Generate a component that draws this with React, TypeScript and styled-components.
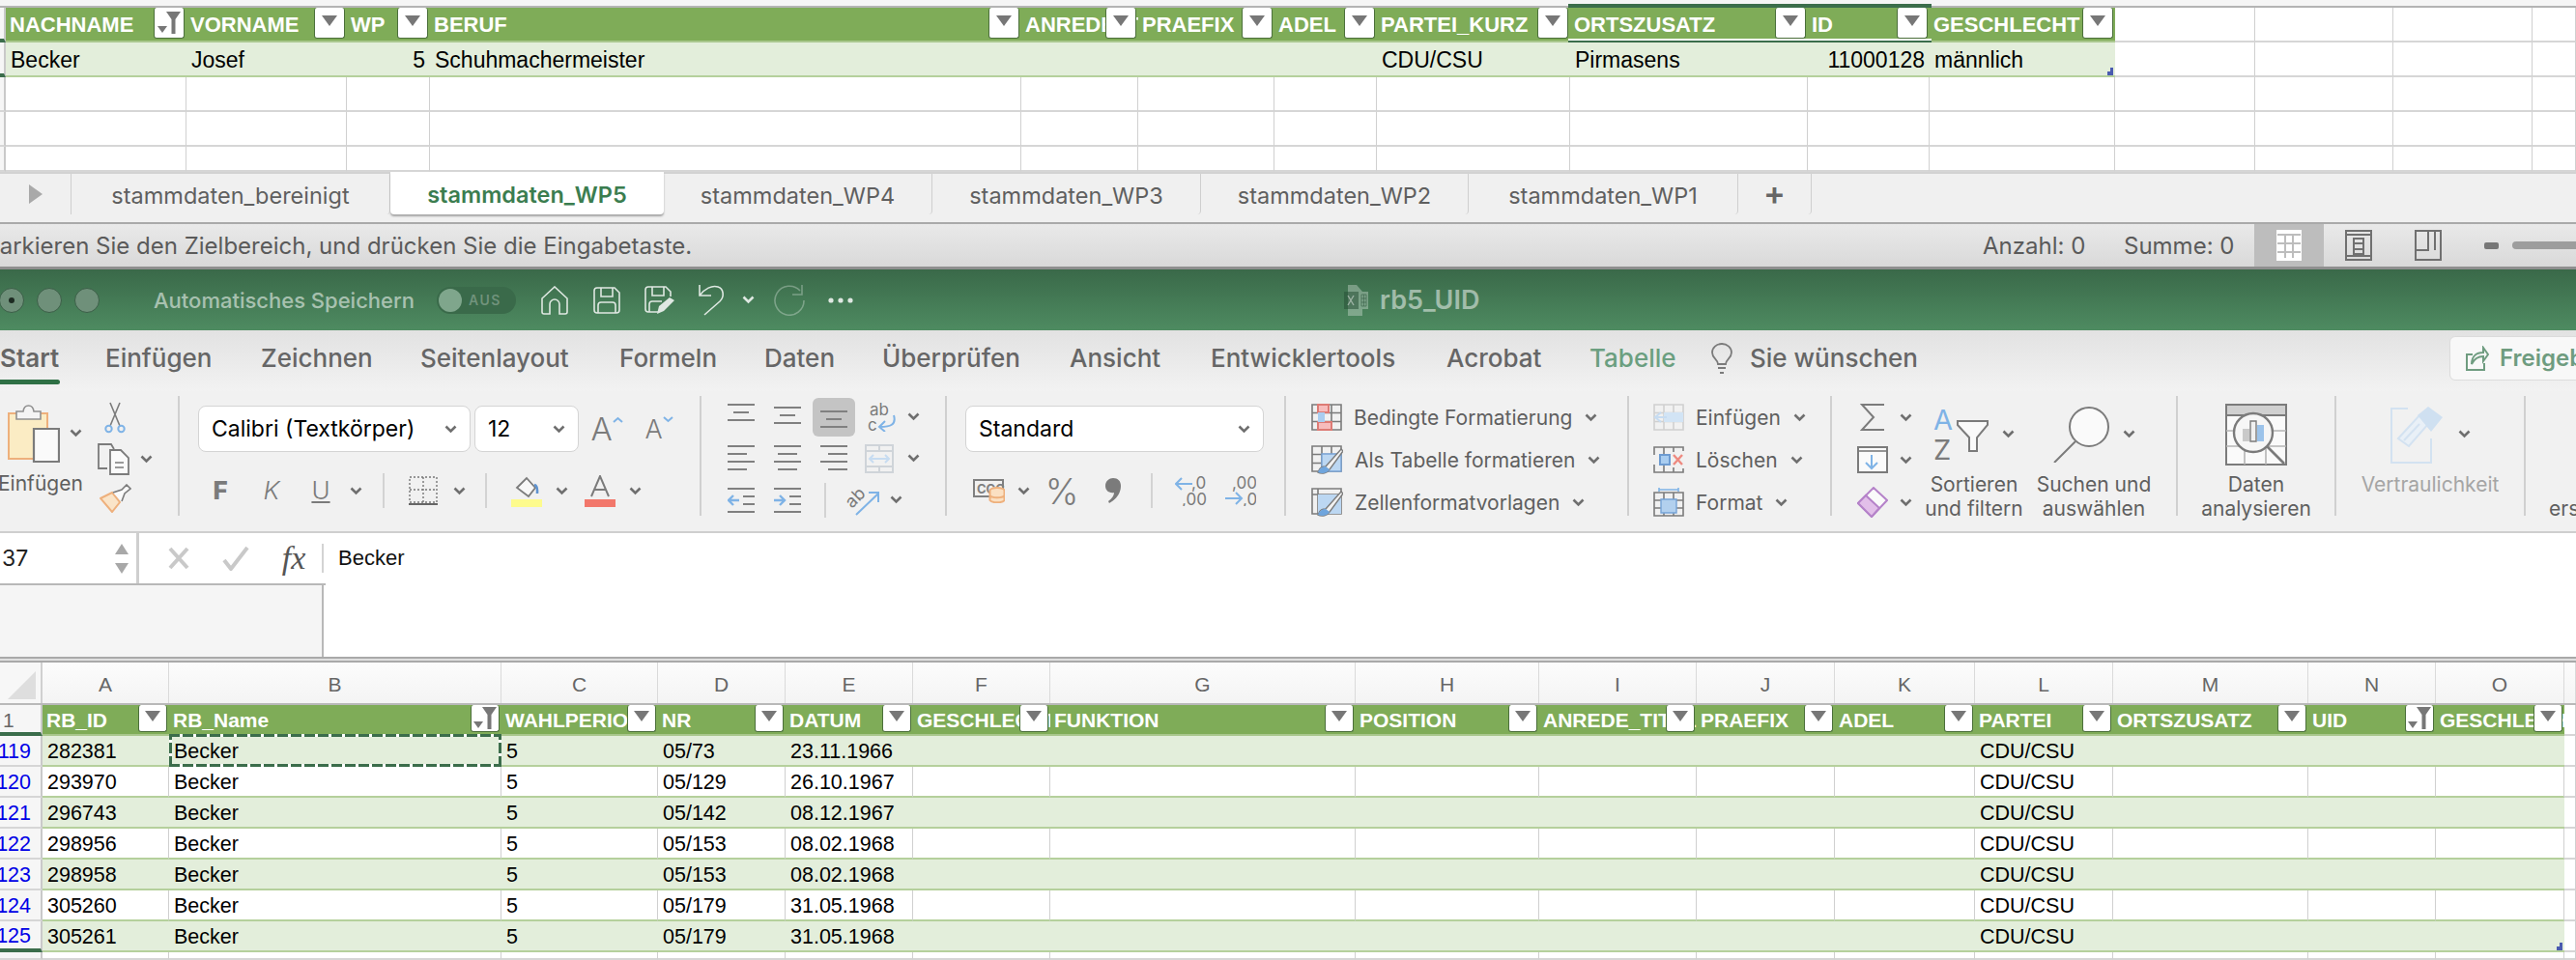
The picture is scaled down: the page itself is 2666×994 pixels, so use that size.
import * as React from "react";
import styled, { createGlobalStyle } from "styled-components";

const GRAY = "#7b7b7b";
const BLUE = "#7fb3e6";
const ORANGE = "#eeb07c";

const GlobalStyle = createGlobalStyle`
  html, body {
    margin: 0;
    background: #fff;
    font-family: Inter, "Liberation Sans", sans-serif;
  }
`;

const Page = styled.div`
  width: 2666px;
  height: 994px;
  overflow: hidden;
  display: flex;
  flex-direction: column;
`;

const Glyph = styled.svg`
  display: block;
  flex: none;
  fill: none;
`;

const Chevron = ({ color = "#6f6f6f" }: { color?: string }) => (
  <Glyph width="13" height="9" viewBox="0 0 13 9">
    <path d="M1.5 1.5l5 5 5-5" stroke={color} strokeWidth="2.6" />
  </Glyph>
);

/* ---------- spreadsheet parts ---------- */

const SheetRow = styled.div<{ $cols: string; $h: number; $size: number }>`
  display: grid;
  grid-template-columns: ${(p) => p.$cols};
  height: ${(p) => p.$h}px;
  flex: none;
  position: relative;
  font-family: "Liberation Sans", sans-serif;
  font-size: ${(p) => p.$size}px;
  color: #000;
`;

const Gutter = styled.div<{ $mark?: boolean }>`
  box-sizing: border-box;
  background: #f6f6f6;
  border-right: 2px solid #c9c9c9;
  border-bottom: ${(p) => (p.$mark ? "4px solid #3b6d4b" : "2px solid #d6d6d6")};
  overflow: hidden;
`;

const RowNumber = styled(Gutter)<{ $first?: boolean }>`
  display: flex;
  align-items: center;
  justify-content: ${(p) => (p.$first ? "flex-start" : "flex-end")};
  padding: ${(p) => (p.$first ? "3px 0 0 3px" : "3px 10px 0 0")};
  color: ${(p) => (p.$first ? "#666" : "#0000e6")};
  white-space: nowrap;
`;

const Cell = styled.div<{ $band?: boolean; $table?: boolean; $right?: boolean; $handle?: boolean }>`
  box-sizing: border-box;
  position: relative;
  min-width: 0;
  display: flex;
  align-items: center;
  justify-content: ${(p) => (p.$right ? "flex-end" : "flex-start")};
  padding: 3px 5px 0;
  white-space: nowrap;
  overflow: hidden;
  background: ${(p) => (p.$band ? "#e3eedb" : "#fff")};
  border-bottom: 2px solid ${(p) => (p.$table ? "#b5d09c" : "#d6d6d6")};
  border-right: ${(p) => (p.$band ? "0" : "1px solid #d0d0d0")};
  ${(p) =>
    p.$handle &&
    `&::after {
      content: "";
      position: absolute;
      right: 2px;
      bottom: 0;
      width: 6px;
      height: 8px;
      background: #4a5bb0;
      clip-path: polygon(50% 0, 100% 0, 100% 100%, 0 100%, 0 50%, 50% 50%);
    }`}
`;

const HeadCell = styled.div`
  box-sizing: border-box;
  position: relative;
  min-width: 0;
  display: flex;
  align-items: center;
  padding: 2px 4px 0;
  white-space: nowrap;
  overflow: hidden;
  background: #7fac58;
  color: #fff;
  font-weight: 700;
  border-bottom: 2px solid #a9c78d;
`;

const FilterButton = styled.div<{ $w: number }>`
  position: absolute;
  top: 0;
  right: 2px;
  bottom: 2px;
  width: ${(p) => p.$w}px;
  box-sizing: border-box;
  background: #fff;
  border-radius: 3px;
  border: 1px solid #4b6f3a;
  border-top: 0;
  display: flex;
  align-items: center;
  justify-content: center;
  &::before {
    content: "";
    margin-top: -4px;
    border-left: 8px solid transparent;
    border-right: 8px solid transparent;
    border-top: 11px solid #777;
  }
`;

const FilterOnButton = styled(FilterButton)`
  &::before {
    display: none;
  }
`;

const FunnelMark = () => (
  <Glyph width="28" height="30" viewBox="0 0 28 30">
    <path d="M11 3h15l-5.5 8v15h-4V11z" fill="#777" />
    <path d="M2 18h10l-5 7z" fill="#777" />
  </Glyph>
);

const SelectionBand = styled.div`
  position: absolute;
  grid-column: 10 / 12;
  grid-row: 1;
  top: -4px;
  bottom: -2px;
  left: -2px;
  right: -2px;
  border-top: 4px solid #3b6d4b;
  border-bottom: 4px solid #3b6d4b;
  box-shadow: inset 0 -2px 0 #fff;
  pointer-events: none;
`;

const Marquee = styled.div`
  position: absolute;
  grid-column: 3 / 4;
  grid-row: 1;
  top: -2px;
  bottom: 0;
  left: 0;
  right: 0;
  pointer-events: none;
  background:
    repeating-linear-gradient(90deg, #3b6d4b 0 11px, #fff 11px 14px) top / 100% 3px no-repeat,
    repeating-linear-gradient(90deg, #3b6d4b 0 11px, #fff 11px 14px) bottom / 100% 3px no-repeat,
    repeating-linear-gradient(0deg, #3b6d4b 0 11px, #fff 11px 14px) left / 3px 100% no-repeat,
    repeating-linear-gradient(0deg, #3b6d4b 0 11px, #fff 11px 14px) right / 3px 100% no-repeat;
`;

/* ---------- upper window ---------- */

const TopStrip = styled.div`
  height: 6px;
  flex: none;
  background: #f5f5f5;
  border-bottom: 2px solid #b4b4b4;
`;

const TOP_COLS = "6px 187px 166px 86px 612px 121px 141px 106px 200px 246px 126px 192px 145px 143px 144px 45px";
const BOTTOM_COLS = "44px 131px 344px 162px 132px 132px 142px 316px 190px 163px 143px 145px 143px 202px 132px 133px 12px";

const TOP_HEAD = ["NACHNAME", "VORNAME", "WP", "BERUF", "ANREDE_TITEL", "PRAEFIX", "ADEL", "PARTEI_KURZ", "ORTSZUSATZ", "ID", "GESCHLECHT"];
const TOP_ROW = ["Becker", "Josef", "5", "Schuhmachermeister", "", "", "", "CDU/CSU", "Pirmasens", "11000128", "männlich"];

const TabBar = styled.div`
  box-sizing: border-box;
  height: 54px;
  flex: none;
  display: flex;
  background: #f0f0f0;
  border-top: 2px solid #d2d2d2;
  border-bottom: 2px solid #a9a9a9;
`;

const TabArrow = styled.div`
  width: 74px;
  height: 42px;
  flex: none;
  box-sizing: border-box;
  border-right: 1px solid #cfcfcf;
  display: flex;
  align-items: center;
  justify-content: center;
  &::before {
    content: "";
    border-top: 10px solid transparent;
    border-bottom: 10px solid transparent;
    border-left: 14px solid #a9a9a9;
  }
`;

const SheetTab = styled.div<{ $w: number; $active?: boolean }>`
  width: ${(p) => p.$w}px;
  height: ${(p) => (p.$active ? 44 : 42)}px;
  margin-top: ${(p) => (p.$active ? -2 : 0)}px;
  padding-top: 2px;
  flex: none;
  box-sizing: border-box;
  display: flex;
  align-items: center;
  justify-content: center;
  font-size: 23.5px;
  white-space: nowrap;
  color: ${(p) => (p.$active ? "#3b7d4f" : "#5f5f5f")};
  font-weight: ${(p) => (p.$active ? 600 : 400)};
  background: ${(p) => (p.$active ? "#fff" : "transparent")};
  border-right: ${(p) => (p.$active ? "0" : "1px solid #cfcfcf")};
  border-radius: 0 0 4px 4px;
  box-shadow: ${(p) => (p.$active ? "0 2px 2px #a5a5a5" : "none")};
`;

const PlusTab = styled(SheetTab)`
  color: #666;
  font-size: 34px;
  font-weight: 600;
  padding: 0 0 3px;
`;

const StatusBar = styled.div`
  box-sizing: border-box;
  height: 44px;
  flex: none;
  display: flex;
  align-items: center;
  background: linear-gradient(#e9e9e9, #d9d9d9);
  font-size: 24px;
  color: #5a5a5a;
`;

const StatusText = styled.div`
  margin-left: -22px;
  width: 2074px;
  flex: none;
  white-space: nowrap;
`;

const StatusValue = styled.div<{ $w: number }>`
  width: ${(p) => p.$w}px;
  flex: none;
  white-space: nowrap;
`;

const ViewButton = styled.div<{ $active?: boolean }>`
  width: 72px;
  height: 44px;
  flex: none;
  display: flex;
  align-items: center;
  justify-content: center;
  background: ${(p) => (p.$active ? "#bdbdbd" : "transparent")};
`;

const ZoomSlider = styled.div`
  margin-left: 22px;
  display: flex;
  align-items: center;
  gap: 14px;
  &::before {
    content: "";
    width: 15px;
    height: 7px;
    background: #777;
    border-radius: 2px;
  }
  &::after {
    content: "";
    width: 90px;
    height: 8px;
    background: #9d9d9d;
    border-radius: 4px;
  }
`;

const BehindLine = styled.div`
  height: 3px;
  flex: none;
  background: #8f8f8f;
`;

/* ---------- title bar ---------- */

const TitleBar = styled.div`
  box-sizing: border-box;
  height: 63px;
  flex: none;
  display: flex;
  align-items: center;
  background: linear-gradient(#3a6949, #4e8b61);
  color: rgba(255, 255, 255, 0.5);
`;

const WindowDots = styled.div`
  margin-left: -1px;
  width: 160px;
  flex: none;
  display: flex;
  gap: 13px;
`;

const WindowDot = styled.div<{ $on?: boolean }>`
  width: 26px;
  height: 26px;
  box-sizing: border-box;
  border-radius: 50%;
  background: #6f907a;
  border: 1px solid #3c5f48;
  display: flex;
  align-items: center;
  justify-content: center;
  &::after {
    content: "";
    width: 6px;
    height: 6px;
    border-radius: 50%;
    background: ${(p) => (p.$on ? "#1d2b22" : "transparent")};
  }
`;

const AutoSave = styled.div`
  width: 293px;
  flex: none;
  font-size: 22px;
  font-weight: 500;
  white-space: nowrap;
  color: rgba(255, 255, 255, 0.55);
`;

const Toggle = styled.div`
  width: 82px;
  height: 28px;
  flex: none;
  box-sizing: border-box;
  margin-right: 13px;
  border-radius: 14px;
  background: #3a6a4a;
  display: flex;
  align-items: center;
  gap: 7px;
  padding-left: 2px;
  font-size: 14px;
  font-weight: 600;
  letter-spacing: 1.5px;
  color: rgba(255, 255, 255, 0.28);
  &::before {
    content: "";
    width: 24px;
    height: 24px;
    border-radius: 50%;
    background: #7fa68c;
  }
`;

const QuickTool = styled.div<{ $w: number }>`
  width: ${(p) => p.$w}px;
  flex: none;
  display: flex;
  justify-content: center;
`;

const DocTitle = styled.div`
  margin-left: 498px;
  display: flex;
  align-items: center;
  gap: 11px;
  font-size: 27px;
  font-weight: 600;
  color: rgba(255, 255, 255, 0.5);
`;

const QS = "#dfe8e2";

const HomeIcon = () => (
  <Glyph width="28" height="30" viewBox="0 0 28 30">
    <path d="M1 13L14 1l13 12v14a2 2 0 0 1-2 2h-6V19a5 5 0 0 0-10 0v10H3a2 2 0 0 1-2-2z" stroke={QS} strokeWidth="1.6" />
  </Glyph>
);
const SaveIcon = () => (
  <Glyph width="28" height="28" viewBox="0 0 28 28">
    <path d="M4 1h18l5 5v18a3 3 0 0 1-3 3H4a3 3 0 0 1-3-3V4a3 3 0 0 1 3-3zM8 1v9h12V1M5 27v-8a3 3 0 0 1 3-3h12a3 3 0 0 1 3 3v8" stroke={QS} strokeWidth="1.6" />
  </Glyph>
);
const SaveAsIcon = () => (
  <Glyph width="32" height="30" viewBox="0 0 32 30">
    <path d="M14 27H4a3 3 0 0 1-3-3V4a3 3 0 0 1 3-3h18l5 5v5M8 1v9h12V1M5 27v-8a3 3 0 0 1 3-3h10" stroke={QS} strokeWidth="1.6" />
    <path d="M13 29l2-8 11-9 5 3-11 11z" fill={QS} />
  </Glyph>
);
const UndoIcon = () => (
  <Glyph width="28" height="33" viewBox="0 0 28 33">
    <path d="M1 1v11h12M1 12C6 5 14 1 20 3c6 2 7 10 2 15L6 32" stroke={QS} strokeWidth="1.6" />
  </Glyph>
);
const RedoIcon = () => (
  <Glyph width="33" height="33" viewBox="0 0 33 33">
    <path d="M28 7A15 15 0 1 0 32 17M30 1v10H20" stroke="rgba(255,255,255,.3)" strokeWidth="1.6" />
  </Glyph>
);
const MoreIcon = () => (
  <Glyph width="26" height="6" viewBox="0 0 26 6">
    <circle cx="3" cy="3" r="2.6" fill={QS} />
    <circle cx="13" cy="3" r="2.6" fill={QS} />
    <circle cx="23" cy="3" r="2.6" fill={QS} />
  </Glyph>
);
const XlsFileIcon = () => (
  <Glyph width="26" height="34" viewBox="0 0 26 34">
    <path d="M4 1h9l6 7h6v18h-6v7H4z" fill="rgba(255,255,255,.3)" />
    <path d="M0 8h15v18H0z" fill="rgba(40,80,55,.55)" />
    <path d="M4 12l6 10M10 12l-6 10" stroke="rgba(255,255,255,.45)" strokeWidth="1.4" />
    <path d="M18 11h5v12h-5zM20.5 11v12M18 15h5M18 19h5" stroke="rgba(40,80,55,.5)" strokeWidth="1" />
  </Glyph>
);

/* ---------- ribbon tabs ---------- */

const RibbonTabs = styled.div`
  box-sizing: border-box;
  height: 63px;
  flex: none;
  padding-bottom: 6px;
  display: flex;
  align-items: center;
  overflow: hidden;
  background: linear-gradient(#e2e2e2, #f2f2f2);
  font-size: 26px;
  color: #666;
`;

const RibbonTab = styled.div<{ $w: number; $on?: boolean; $green?: boolean }>`
  width: ${(p) => p.$w}px;
  flex: none;
  position: relative;
  white-space: nowrap;
  font-weight: ${(p) => (p.$on ? 600 : 500)};
  color: ${(p) => (p.$green ? "#6b9f80" : "#666")};
  ${(p) =>
    p.$on &&
    `&::after {
      content: "";
      position: absolute;
      left: 0;
      top: 38px;
      width: 62px;
      height: 5px;
      border-radius: 0 3px 3px 0;
      background: #2f7045;
    }`}
`;

const ShareButton = styled.div`
  width: 180px;
  height: 46px;
  flex: none;
  box-sizing: border-box;
  padding-left: 16px;
  display: flex;
  align-items: center;
  gap: 11px;
  background: #f8f8f8;
  border: 1px solid #dcdcdc;
  border-radius: 6px;
  font-size: 24px;
  font-weight: 600;
  color: #6f9c80;
  white-space: nowrap;
`;

/* ---------- ribbon body ---------- */

const RibbonBody = styled.div`
  box-sizing: border-box;
  height: 147px;
  flex: none;
  padding-top: 5px;
  display: flex;
  background: #f1f1f1;
  border-bottom: 2px solid #cfcfcf;
  font-size: 21px;
  color: #5f5f5f;
`;

const Group = styled.div<{ $w: number; $pad?: number; $row?: boolean; $last?: boolean }>`
  width: ${(p) => p.$w}px;
  height: 124px;
  flex: none;
  box-sizing: border-box;
  padding-left: ${(p) => p.$pad || 0}px;
  display: flex;
  flex-direction: ${(p) => (p.$row ? "row" : "column")};
  border-right: ${(p) => (p.$last ? "0" : "2px solid #d0d0d0")};
  overflow: ${(p) => (p.$last ? "hidden" : "visible")};
`;

const ToolRow = styled.div<{ $h?: number; $top?: number }>`
  height: ${(p) => p.$h || 43}px;
  margin-top: ${(p) => p.$top || 0}px;
  display: flex;
  align-items: center;
  flex: none;
`;

const Tool = styled.div<{ $w: number }>`
  width: ${(p) => p.$w}px;
  flex: none;
  display: flex;
  align-items: center;
  justify-content: center;
  white-space: nowrap;
`;

const ActiveTool = styled.div`
  width: 44px;
  height: 40px;
  background: #c4c4c4;
  border-radius: 6px;
  display: flex;
  align-items: center;
  justify-content: center;
`;

const ToolSeparator = styled.div<{ $h?: number }>`
  width: 2px;
  flex: none;
  height: ${(p) => p.$h || 36}px;
  background: #d3d3d3;
`;

const Combo = styled.div<{ $w: number }>`
  width: ${(p) => p.$w}px;
  height: 48px;
  flex: none;
  box-sizing: border-box;
  padding: 0 13px;
  display: flex;
  align-items: center;
  justify-content: space-between;
  background: #fff;
  border: 1px solid #d4d4d4;
  border-radius: 8px;
  color: #000;
  font-size: 23px;
  white-space: nowrap;
`;

const PasteColumn = styled.div`
  width: 100px;
  flex: none;
  display: flex;
  flex-direction: column;
`;

const PasteTop = styled.div`
  height: 79px;
  flex: none;
  padding-left: 8px;
  display: flex;
  align-items: center;
  gap: 10px;
  margin-top: -1px;
`;

const SmallColumn = styled.div`
  width: 36px;
  flex: none;
  display: flex;
  flex-direction: column;
  align-items: center;
  gap: 9px;
  margin-left: 1px;
  padding-top: 6px;
`;

const CopyRow = styled.div`
  display: flex;
  align-items: center;
  gap: 11px;
  width: 36px;
  position: relative;
`;

const ListRow = styled.div`
  height: 44px;
  flex: none;
  display: flex;
  align-items: center;
  white-space: nowrap;
`;

const ListLabel = styled.span`
  margin: 0 13px 0 12px;
  color: #5f5f5f;
`;

const BigColumn = styled.div<{ $w: number }>`
  width: ${(p) => p.$w}px;
  flex: none;
  display: flex;
  flex-direction: column;
  align-items: center;
`;

const BigIcon = styled.div<{ $gap?: number }>`
  height: 79px;
  flex: none;
  display: flex;
  align-items: center;
  gap: ${(p) => p.$gap || 14}px;
`;

const BigLabel = styled.div<{ $dim?: boolean }>`
  line-height: 25px;
  flex: none;
  text-align: center;
  white-space: nowrap;
  color: ${(p) => (p.$dim ? "#a5a5a5" : "#5f5f5f")};
`;

const PasteLabel = styled(BigLabel)`
  text-align: left;
  margin-left: -2px;
`;

const LastLabel = styled.div`
  padding: 104px 0 0 24px;
  line-height: 25px;
  white-space: nowrap;
`;

const FontGlyph = styled.span<{ $size: number; $weight?: number; $italic?: boolean; $color?: string }>`
  font-size: ${(p) => p.$size}px;
  font-weight: ${(p) => p.$weight || 400};
  font-style: ${(p) => (p.$italic ? "italic" : "normal")};
  color: ${(p) => p.$color || "#7b7b7b"};
  line-height: 1;
`;

/* ribbon icons */

const ClipboardIcon = () => (
  <Glyph width="54" height="60" viewBox="0 0 54 60">
    <path d="M1 9h40v47H1z" fill="#fbecc4" stroke={ORANGE} strokeWidth="2" />
    <path d="M9 15V7h7c1-8 10-8 11 0h7v8z" fill="#f4f4f4" stroke="#909090" strokeWidth="1.6" />
    <path d="M27 25h26v34H27z" fill="#fafafa" stroke={GRAY} strokeWidth="2.2" />
  </Glyph>
);
const ScissorsIcon = () => (
  <Glyph width="22" height="34" viewBox="0 0 22 34">
    <path d="M6 1l10 24M16 1L6 25" stroke={GRAY} strokeWidth="1.6" />
    <circle cx="4.5" cy="28" r="3.2" stroke={BLUE} strokeWidth="2" />
    <circle cx="17.5" cy="28" r="3.2" stroke={BLUE} strokeWidth="2" />
  </Glyph>
);
const CopyIcon = () => (
  <Glyph width="33" height="33" viewBox="0 0 33 33">
    <path d="M10 26H1V1h13l3 5" stroke={GRAY} strokeWidth="1.8" />
    <path d="M13 7h11l8 8v17H13z" fill="#fafafa" stroke={GRAY} strokeWidth="1.8" />
    <path d="M18 20h9M18 25h9" stroke={GRAY} strokeWidth="1.6" />
  </Glyph>
);
const BrushIcon = () => (
  <Glyph width="33" height="30" viewBox="0 0 33 30">
    <path d="M1 15l12-6 8 10-8 10z" fill="#fae4c8" stroke={ORANGE} strokeWidth="2" />
    <path d="M14 9l9-3 5-5 4 4-6 5-3 8" fill="#fafafa" stroke={GRAY} strokeWidth="1.6" />
  </Glyph>
);
const GrowFontIcon = ({ up }: { up: boolean }) => (
  <Glyph width="11" height="26" viewBox="0 0 11 26">
    <path d={up ? "M1 6l4.5-4 4.5 4" : "M1 1l4.5 4 4.5-4"} stroke={BLUE} strokeWidth="2" />
  </Glyph>
);
const BorderIcon = () => (
  <Glyph width="30" height="30" viewBox="0 0 30 30">
    <path d="M1 1h28v26H1zM15 1v26M1 14h28" stroke="#777" strokeWidth="1.4" strokeDasharray="2 2" />
    <path d="M0 29h30" stroke="#666" strokeWidth="2" />
  </Glyph>
);
const FillIcon = () => (
  <Glyph width="32" height="33" viewBox="0 0 32 33">
    <path d="M6 13L16 3l9 10-7 9z" fill="#f8f8f8" stroke={GRAY} strokeWidth="1.8" />
    <path d="M24 10c4 1 3 6 3 9" stroke="#5f93d0" strokeWidth="2.6" />
    <path d="M0 25h32v8H0z" fill="#fdfb8d" />
  </Glyph>
);
const FontColorIcon = () => (
  <Glyph width="32" height="33" viewBox="0 0 32 33">
    <path d="M7 22L16 1l9 21M10 15h12" stroke={GRAY} strokeWidth="2" />
    <path d="M0 25h32v8H0z" fill="#f2776b" />
  </Glyph>
);
const AlignIcon = ({ h = "center", v = "mid" }: { h?: string; v?: string }) => {
  const y0 = v === "top" ? 1 : v === "mid" ? 4 : 8;
  const d = (w: number, y: number) => {
    const x = h === "left" ? 0 : h === "right" ? 28 - w : (28 - w) / 2;
    return `M${x} ${y}h${w}`;
  };
  const lines =
    v === "fill"
      ? [d(28, 1), d(20, 9), d(28, 17), d(20, 25)]
      : [d(28, y0), d(16, y0 + 8), d(28, y0 + 16)];
  return (
    <Glyph width="28" height="28" viewBox="0 0 28 28">
      <path d={lines.join("")} stroke="#808080" strokeWidth="2" />
    </Glyph>
  );
};
const WrapIcon = () => (
  <Glyph width="30" height="30" viewBox="0 0 30 30">
    <text x="2" y="13" fontSize="17" fill={GRAY}>ab</text>
    <text x="0" y="29" fontSize="17" fill={GRAY}>c</text>
    <path d="M27 13c3 10-4 12-14 12M18 19l-6 6 6 5" stroke={BLUE} strokeWidth="2" />
  </Glyph>
);
const MergeIcon = () => (
  <Glyph width="30" height="30" viewBox="0 0 30 30">
    <path d="M1 1h28v28H1zM1 7h28M1 23h28M15 1v6M15 23v6" stroke="#cfd4d9" strokeWidth="2" />
    <path d="M5 15h20M9 11l-4 4 4 4M21 11l4 4-4 4" stroke="#c7dcf1" strokeWidth="2" />
  </Glyph>
);
const IndentIcon = ({ out }: { out: boolean }) => (
  <Glyph width="28" height="26" viewBox="0 0 28 26">
    <path d="M0 1h28M16 9h12M16 17h12M0 25h28" stroke="#808080" strokeWidth="2" />
    <path d={out ? "M12 13H1M6 8l-5 5 5 5" : "M0 13h11M6 8l5 5-5 5"} stroke={BLUE} strokeWidth="2.4" />
  </Glyph>
);
const RotateIcon = () => (
  <Glyph width="34" height="32" viewBox="0 0 34 32">
    <text x="0" y="19" fontSize="18" fill={GRAY} transform="rotate(-45 10 15)">ab</text>
    <path d="M10 31L33 9M23 8h10v10" stroke={BLUE} strokeWidth="2" />
  </Glyph>
);
const CurrencyIcon = () => (
  <Glyph width="33" height="26" viewBox="0 0 33 26">
    <path d="M1 2h30v17H1z" stroke="#808080" strokeWidth="2" />
    <text x="4" y="16" fontSize="13" fontWeight="700" fill="#808080">CCC</text>
    <ellipse cx="25" cy="13" rx="7.5" ry="3" fill="#fbe0c2" stroke={ORANGE} strokeWidth="2" />
    <path d="M17.5 13v10c2 3 13 3 15 0V13M17.5 18c2 3 13 3 15 0" fill="#fbe0c2" stroke={ORANGE} strokeWidth="2" />
  </Glyph>
);
const CommaIcon = () => (
  <Glyph width="16" height="26" viewBox="0 0 16 26">
    <path d="M8 0c5 0 8 3 8 8 0 8-5 14-12 18l-1-2c4-3 6-6 6-9-5 1-9-2-9-7 0-5 4-8 8-8z" fill="#7b7b7b" />
  </Glyph>
);
const DecimalIcon = ({ more }: { more: boolean }) => (
  <Glyph width="33" height="32" viewBox="0 0 33 32">
    {more ? (
      <>
        <text x="8" y="14" fontSize="17" fill={GRAY}>,00</text>
        <text x="19" y="31" fontSize="17" fill={GRAY}>,0</text>
        <path d="M1 24h17M12 18l6 6-6 6" stroke={BLUE} strokeWidth="2" />
      </>
    ) : (
      <>
        <text x="17" y="14" fontSize="17" fill={GRAY}>,0</text>
        <text x="7" y="31" fontSize="17" fill={GRAY}>,00</text>
        <path d="M18 9H1M7 3L1 9l6 6" stroke={BLUE} strokeWidth="2" />
      </>
    )}
  </Glyph>
);
const GridBase = ({ stroke = GRAY }: { stroke?: string }) => (
  <path d="M1 1h30v26H1zM11 1v26M21 1v26M1 9.5h30M1 18.5h30" stroke={stroke} strokeWidth="1.6" />
);
const CondFormatIcon = () => (
  <Glyph width="32" height="28" viewBox="0 0 32 28">
    <GridBase />
    <path d="M7 1h11v8H7zM7 19h14v8H7z" fill="#f7bcbc" stroke="#dd7b75" strokeWidth="2" />
    <path d="M7 9h7v10H7z" fill="#a9cdf0" />
  </Glyph>
);
const TableFormatIcon = () => (
  <Glyph width="33" height="30" viewBox="0 0 33 30">
    <GridBase />
    <path d="M11 9h20v18H11z" fill="#bcd7f2" stroke="#79a5d8" strokeWidth="1.4" />
    <path d="M7 28c2-6 5-6 8-6L31 4l2 2-14 19c-2 4-8 5-12 3z" fill="#f1f1f1" stroke={GRAY} strokeWidth="1.4" />
    <path d="M7 28c2-5 5-6 8-6l4 3c-2 4-8 5-12 3z" fill="#6fa5dd" />
  </Glyph>
);
const CellStyleIcon = () => (
  <Glyph width="33" height="30" viewBox="0 0 33 30">
    <path d="M1 1h30v26H1zM1 7h30M7 1v26" stroke={GRAY} strokeWidth="1.6" />
    <path d="M7 7h24v20H7z" fill="#bcd7f2" />
    <path d="M7 28c2-6 5-6 8-6L31 4l2 2-14 19c-2 4-8 5-12 3z" fill="#f1f1f1" stroke={GRAY} strokeWidth="1.4" />
    <path d="M7 28c2-5 5-6 8-6l4 3c-2 4-8 5-12 3z" fill="#6fa5dd" />
  </Glyph>
);
const InsertCellsIcon = () => (
  <Glyph width="32" height="28" viewBox="0 0 32 28">
    <GridBase stroke="#d0d0d0" />
    <path d="M11 9h20v10H11z" fill="#d2e4f5" />
    <path d="M14 14H2M8 9l-6 5 6 5" stroke="#c7dcf1" strokeWidth="2" />
  </Glyph>
);
const DeleteCellsIcon = () => (
  <Glyph width="32" height="28" viewBox="0 0 32 28">
    <path d="M1 9V1h30v4M1 19v8h30v-4M11 1v8M21 1v5M11 19v8M21 22v5" stroke={GRAY} strokeWidth="1.6" />
    <path d="M7 9h10v10H7z" fill="#a9cdf0" stroke="#6d9bd1" strokeWidth="2" />
    <path d="M21 9l9 10M30 9l-9 10" stroke="#ee8a80" strokeWidth="2.4" />
  </Glyph>
);
const FormatCellsIcon = () => (
  <Glyph width="32" height="30" viewBox="0 0 32 30">
    <path d="M1 5h30v24H1zM11 5v24M21 5v24M1 13h30M1 21h30" stroke={GRAY} strokeWidth="1.6" />
    <path d="M8 12h16v14H8z" fill="#b2d0ee" stroke="#76a3d6" strokeWidth="1.4" />
    <path d="M6 2h20M6 0v4M26 0v4" stroke={BLUE} strokeWidth="1.6" />
  </Glyph>
);
const SigmaIcon = () => (
  <Glyph width="26" height="28" viewBox="0 0 26 28">
    <path d="M25 1H2l12 13L2 27h23" stroke={GRAY} strokeWidth="2" />
  </Glyph>
);
const FillDownIcon = () => (
  <Glyph width="32" height="28" viewBox="0 0 32 28">
    <path d="M1 1h30v26H1z" fill="#fafafa" stroke={GRAY} strokeWidth="2" />
    <path d="M1 5h30" stroke={GRAY} strokeWidth="1.6" />
    <path d="M15 9v14M9 17l6 6 6-6" stroke={BLUE} strokeWidth="2" />
  </Glyph>
);
const EraserIcon = () => (
  <Glyph width="32" height="32" viewBox="0 0 32 32">
    <path d="M1 17L17 1l14 13-16 17z" fill="#fafafa" stroke="#b582c9" strokeWidth="2" />
    <path d="M1 17l8-8 14 13-8 9z" fill="#e2bfe9" stroke="#b582c9" strokeWidth="2" />
  </Glyph>
);
const SortFilterIcon = () => (
  <Glyph width="58" height="58" viewBox="0 0 58 58">
    <text x="0" y="24" fontSize="29" fill={BLUE}>A</text>
    <text x="0" y="55" fontSize="29" fill={GRAY}>Z</text>
    <path d="M25 15h31v4L45 32v14h-8V32L25 19z" fill="#fafafa" stroke={GRAY} strokeWidth="2" />
  </Glyph>
);
const LoupeIcon = () => (
  <Glyph width="58" height="58" viewBox="0 0 58 58">
    <circle cx="37" cy="21" r="20" fill="#fafafa" stroke={GRAY} strokeWidth="2" />
    <path d="M23 36L1 58" stroke={GRAY} strokeWidth="2" />
  </Glyph>
);
const AnalyzeIcon = () => (
  <Glyph width="64" height="64" viewBox="0 0 64 64">
    <path d="M1 1h62v62H1z" fill="#fafafa" stroke={GRAY} strokeWidth="2" />
    <path d="M1 1h62v11H1z" fill="#d0d0d0" stroke={GRAY} strokeWidth="2" />
    <path d="M1 28h62M1 44h62M20 44v19M42 44v19" stroke="#b5b5b5" strokeWidth="1.6" />
    <circle cx="29" cy="30" r="20" fill="#f6f6f6" stroke={GRAY} strokeWidth="2.4" />
    <path d="M18 26h7v13h-7z" fill="#c9c9c9" />
    <path d="M26 18h6v21h-6z" fill="#f0f0f0" stroke={GRAY} strokeWidth="1.4" />
    <path d="M33 22h7v17h-7z" fill="#9cc3ea" />
    <path d="M43 44l18 18" stroke={GRAY} strokeWidth="2.6" />
  </Glyph>
);
const ShieldDocIcon = () => (
  <Glyph width="56" height="60" viewBox="0 0 56 60">
    <path d="M18 3H1v56h41V34" stroke="#d3e2f1" strokeWidth="2" />
    <path d="M8 34L30 10l10 8-21 24z" fill="#e9f0f7" stroke="#d3e2f1" strokeWidth="2" />
    <path d="M14 36L30 19" stroke="#d3e2f1" strokeWidth="2" />
    <path d="M28 10l11-9 15 11-12 15z" fill="#cfe0f1" />
  </Glyph>
);
const BulbIcon = () => (
  <Glyph width="24" height="32" viewBox="0 0 24 32">
    <path d="M8 22c0-5-6-6-6-12a10 9 0 0 1 20 0c0 6-6 7-6 12zM8 26h8M10 31h4" stroke={GRAY} strokeWidth="1.8" />
  </Glyph>
);
const ShareIcon = () => (
  <Glyph width="24" height="26" viewBox="0 0 24 26">
    <path d="M7 9H1v16h18v-7M6 19c0-8 5-12 12-12V2l5 7-5 7v-5c-5 0-9 2-12 8z" stroke="#6f9c80" strokeWidth="2" />
  </Glyph>
);

/* status bar view icons */

const NormalViewIcon = () => (
  <Glyph width="26" height="32" viewBox="0 0 26 32">
    <path d="M0 0h26v32H0z" fill="#fff" />
    <path d="M1 5h24M1 14h24M1 23h24M9 5v24M17 5v24" stroke="#bdbdbd" strokeWidth="2" />
  </Glyph>
);
const PageViewIcon = () => (
  <Glyph width="28" height="32" viewBox="0 0 28 32">
    <path d="M1 1h26v30H1zM1 5h26M1 27h26" stroke="#707070" strokeWidth="2" />
    <path d="M9 9h10v16H9z" stroke="#707070" strokeWidth="2" />
    <path d="M9 14h10M9 20h10" stroke="#707070" strokeWidth="2" />
  </Glyph>
);
const BreakViewIcon = () => (
  <Glyph width="28" height="32" viewBox="0 0 28 32">
    <path d="M1 1h26v30H1zM1 21h14M14 1v20M21 1v20" stroke="#707070" strokeWidth="2" />
  </Glyph>
);

/* ---------- formula bar ---------- */

const FormulaBar = styled.div`
  height: 128px;
  flex: none;
  display: flex;
  background: #fff;
`;

const FormulaLeft = styled.div`
  width: 335px;
  flex: none;
  display: flex;
  flex-direction: column;
`;

const FormulaTop = styled.div`
  height: 52px;
  flex: none;
  display: flex;
  border-bottom: 2px solid #b8b8b8;
  margin-right: -2px;
`;

const NameBox = styled.div`
  width: 144px;
  flex: none;
  box-sizing: border-box;
  padding: 0 8px 0 2px;
  display: flex;
  align-items: center;
  justify-content: space-between;
  font-size: 23px;
  color: #222;
  background: #fff;
  border-right: 3px solid #cfcfcf;
`;

const Spinner = styled.div`
  display: flex;
  flex-direction: column;
  gap: 9px;
  &::before,
  &::after {
    content: "";
    border-left: 7px solid transparent;
    border-right: 7px solid transparent;
  }
  &::before {
    border-bottom: 11px solid #a8a8a8;
  }
  &::after {
    border-top: 11px solid #a8a8a8;
  }
`;

const FormulaTools = styled.div`
  flex: 1;
  display: flex;
  align-items: center;
`;

const FormulaButton = styled.div<{ $w: number }>`
  width: ${(p) => p.$w}px;
  flex: none;
  display: flex;
  justify-content: center;
`;

const FxLabel = styled.span`
  font-family: "Liberation Serif", serif;
  font-style: italic;
  font-size: 34px;
  color: #555;
`;

const FormulaSpacer = styled.div`
  flex: 1;
  background: #f5f5f5;
  border-right: 2px solid #b8b8b8;
`;

const FormulaValue = styled.div`
  flex: 1;
  height: 52px;
  padding-left: 15px;
  display: flex;
  align-items: center;
  font-family: "Liberation Sans", sans-serif;
  font-size: 22px;
  color: #111;
`;

const SplitLine = styled.div`
  box-sizing: border-box;
  height: 6px;
  flex: none;
  background: #e0e0e0;
  border-top: 2px solid #a9a9a9;
  border-bottom: 2px solid #a9a9a9;
`;

const Corner = styled.div`
  box-sizing: border-box;
  background: #f7f7f7;
  border-right: 2px solid #d0d0d0;
  display: flex;
  align-items: flex-end;
  padding: 0 0 4px 8px;
  &::before {
    content: "";
    width: 0;
    height: 0;
    border-left: 29px solid transparent;
    border-bottom: 29px solid #dedede;
  }
`;

const ColumnLetter = styled.div`
  box-sizing: border-box;
  display: flex;
  align-items: center;
  justify-content: center;
  padding-top: 3px;
  background: linear-gradient(#fcfcfc, #f4f4f4);
  border-right: 1px solid #dadada;
  color: #666;
  font-size: 21px;
`;

const LetterRule = styled.div`
  height: 2px;
  flex: none;
  background: #b9b9b9;
`;

const CloseIcon = () => (
  <Glyph width="24" height="26" viewBox="0 0 24 26">
    <path d="M3 3l18 20M21 3L3 23" stroke="#c9c9c9" strokeWidth="4" />
  </Glyph>
);
const CheckIcon = () => (
  <Glyph width="28" height="26" viewBox="0 0 28 26">
    <path d="M2 15l7 9L26 2" stroke="#c9c9c9" strokeWidth="4" />
  </Glyph>
);

/* ---------- bottom sheet data ---------- */

const BOTTOM_HEAD = [
  "RB_ID", "RB_Name", "WAHLPERIODE", "NR", "DATUM", "GESCHLECHT", "FUNKTION", "POSITION",
  "ANREDE_TITEL", "PRAEFIX", "ADEL", "PARTEI", "ORTSZUSATZ", "UID", "GESCHLECHT",
];
const LETTERS = "ABCDEFGHIJKLMNO".split("");
const BOTTOM_ROWS = [
  ["119", "282381", "05/73", "23.11.1966"],
  ["120", "293970", "05/129", "26.10.1967"],
  ["121", "296743", "05/142", "08.12.1967"],
  ["122", "298956", "05/153", "08.02.1968"],
  ["123", "298958", "05/153", "08.02.1968"],
  ["124", "305260", "05/179", "31.05.1968"],
  ["125", "305261", "05/179", "31.05.1968"],
];

const SHEET_TABS: [string, number][] = [
  ["stammdaten_bereinigt", 330],
  ["stammdaten_WP5", 283],
  ["stammdaten_WP4", 278],
  ["stammdaten_WP3", 278],
  ["stammdaten_WP2", 277],
  ["stammdaten_WP1", 279],
];

const UpperSheet = () => (
  <>
    <TopStrip />
    <SheetRow $cols={TOP_COLS} $h={36} $size={22}>
      <Gutter $mark />
      {TOP_HEAD.map((name, i) => (
        <HeadCell key={name}>
          {name}
          {i === 0 ? (
            <FilterOnButton $w={32}>
              <FunnelMark />
            </FilterOnButton>
          ) : (
            <FilterButton $w={32} />
          )}
        </HeadCell>
      ))}
      {[0, 1, 2, 3].map((i) => (
        <Cell key={i} />
      ))}
      <SelectionBand />
    </SheetRow>
    <SheetRow $cols={TOP_COLS} $h={36} $size={23}>
      <Gutter $mark />
      {TOP_ROW.map((text, i) => (
        <Cell key={i} $band $table $right={i === 2 || i === 9} $handle={i === 10}>
          {text}
        </Cell>
      ))}
      {[0, 1, 2, 3].map((i) => (
        <Cell key={i} />
      ))}
    </SheetRow>
    {[36, 36, 26].map((h, r) => (
      <SheetRow key={r} $cols={TOP_COLS} $h={h} $size={23}>
        <Gutter />
        {Array.from({ length: 15 }, (_, i) => (
          <Cell key={i} />
        ))}
      </SheetRow>
    ))}
    <TabBar>
      <TabArrow />
      {SHEET_TABS.map(([name, w], i) => (
        <SheetTab key={name} $w={w} $active={i === 1}>
          {name}
        </SheetTab>
      ))}
      <PlusTab $w={76}>+</PlusTab>
    </TabBar>
    <StatusBar>
      <StatusText>Markieren Sie den Zielbereich, und drücken Sie die Eingabetaste.</StatusText>
      <StatusValue $w={146}>Anzahl: 0</StatusValue>
      <StatusValue $w={135}>Summe: 0</StatusValue>
      <ViewButton $active>
        <NormalViewIcon />
      </ViewButton>
      <ViewButton>
        <PageViewIcon />
      </ViewButton>
      <ViewButton>
        <BreakViewIcon />
      </ViewButton>
      <ZoomSlider />
    </StatusBar>
    <BehindLine />
  </>
);

const Title = () => (
  <TitleBar>
    <WindowDots>
      <WindowDot $on />
      <WindowDot />
      <WindowDot />
    </WindowDots>
    <AutoSave>Automatisches Speichern</AutoSave>
    <Toggle>AUS</Toggle>
    <QuickTool $w={54}><HomeIcon /></QuickTool>
    <QuickTool $w={54}><SaveIcon /></QuickTool>
    <QuickTool $w={56}><SaveAsIcon /></QuickTool>
    <QuickTool $w={52}><UndoIcon /></QuickTool>
    <QuickTool $w={22}><Chevron color="#dfe8e2" /></QuickTool>
    <QuickTool $w={62}><RedoIcon /></QuickTool>
    <QuickTool $w={46}><MoreIcon /></QuickTool>
    <DocTitle>
      <XlsFileIcon />
      rb5_UID
    </DocTitle>
  </TitleBar>
);

const Tabs = () => (
  <RibbonTabs>
    <RibbonTab $w={109} $on>Start</RibbonTab>
    <RibbonTab $w={161}>Einfügen</RibbonTab>
    <RibbonTab $w={165}>Zeichnen</RibbonTab>
    <RibbonTab $w={206}>Seitenlayout</RibbonTab>
    <RibbonTab $w={150}>Formeln</RibbonTab>
    <RibbonTab $w={122}>Daten</RibbonTab>
    <RibbonTab $w={194}>Überprüfen</RibbonTab>
    <RibbonTab $w={146}>Ansicht</RibbonTab>
    <RibbonTab $w={244}>Entwicklertools</RibbonTab>
    <RibbonTab $w={148}>Acrobat</RibbonTab>
    <RibbonTab $w={125} $green>Tabelle</RibbonTab>
    <RibbonTab $w={41}><BulbIcon /></RibbonTab>
    <RibbonTab $w={724}>Sie wünschen</RibbonTab>
    <ShareButton>
      <ShareIcon />
      Freigeben
    </ShareButton>
  </RibbonTabs>
);

const Ribbon = () => (
  <RibbonBody>
    <Group $w={186} $row>
      <PasteColumn>
        <PasteTop>
          <ClipboardIcon />
          <Chevron />
        </PasteTop>
        <PasteLabel>Einfügen</PasteLabel>
      </PasteColumn>
      <SmallColumn>
        <ScissorsIcon />
        <CopyRow>
          <CopyIcon />
          <Chevron />
        </CopyRow>
        <BrushIcon />
      </SmallColumn>
    </Group>

    <Group $w={540} $pad={19}>
      <ToolRow $h={48} $top={10}>
        <Combo $w={282}>
          Calibri (Textkörper)
          <Chevron />
        </Combo>
        <Tool $w={4} />
        <Combo $w={108}>
          12
          <Chevron />
        </Combo>
        <Tool $w={58}>
          <FontGlyph $size={33} $weight={300}>A</FontGlyph>
          <GrowFontIcon up />
        </Tool>
        <Tool $w={50}>
          <FontGlyph $size={27} $weight={300}>A</FontGlyph>
          <GrowFontIcon up={false} />
        </Tool>
      </ToolRow>
      <ToolRow $h={44} $top={18}>
        <Tool $w={46}><FontGlyph $size={26} $weight={800}>F</FontGlyph></Tool>
        <Tool $w={60}><FontGlyph $size={26} $weight={300} $italic>K</FontGlyph></Tool>
        <Tool $w={42}><FontGlyph $size={26} $weight={300}><u>U</u></FontGlyph></Tool>
        <Tool $w={30}><Chevron /></Tool>
        <Tool $w={28}><ToolSeparator /></Tool>
        <Tool $w={54}><BorderIcon /></Tool>
        <Tool $w={20}><Chevron /></Tool>
        <Tool $w={36}><ToolSeparator /></Tool>
        <Tool $w={48}><FillIcon /></Tool>
        <Tool $w={24}><Chevron /></Tool>
        <Tool $w={56}><FontColorIcon /></Tool>
        <Tool $w={16}><Chevron /></Tool>
      </ToolRow>
    </Group>

    <Group $w={254} $pad={17}>
      <ToolRow>
        <Tool $w={48}><AlignIcon v="top" /></Tool>
        <Tool $w={48}><AlignIcon v="mid" /></Tool>
        <Tool $w={48}><ActiveTool><AlignIcon v="bottom" /></ActiveTool></Tool>
        <Tool $w={52}><WrapIcon /></Tool>
        <Tool $w={12}><Chevron /></Tool>
      </ToolRow>
      <ToolRow>
        <Tool $w={48}><AlignIcon h="left" v="fill" /></Tool>
        <Tool $w={48}><AlignIcon h="center" v="fill" /></Tool>
        <Tool $w={48}><AlignIcon h="right" v="fill" /></Tool>
        <Tool $w={46}><MergeIcon /></Tool>
        <Tool $w={24}><Chevron /></Tool>
      </ToolRow>
      <ToolRow>
        <Tool $w={48}><IndentIcon out /></Tool>
        <Tool $w={48}><IndentIcon out={false} /></Tool>
        <Tool $w={30}><ToolSeparator /></Tool>
        <Tool $w={48}><RotateIcon /></Tool>
        <Tool $w={20}><Chevron /></Tool>
      </ToolRow>
    </Group>

    <Group $w={351} $pad={19}>
      <ToolRow $h={48} $top={10}>
        <Combo $w={309}>
          Standard
          <Chevron />
        </Combo>
      </ToolRow>
      <ToolRow $h={44} $top={18}>
        <Tool $w={48}><CurrencyIcon /></Tool>
        <Tool $w={24}><Chevron /></Tool>
        <Tool $w={56}><FontGlyph $size={37} $weight={300}>%</FontGlyph></Tool>
        <Tool $w={50}><CommaIcon /></Tool>
        <Tool $w={30}><ToolSeparator /></Tool>
        <Tool $w={51}><DecimalIcon more={false} /></Tool>
        <Tool $w={51}><DecimalIcon more /></Tool>
      </ToolRow>
    </Group>

    <Group $w={355} $pad={26}>
      <ListRow><CondFormatIcon /><ListLabel>Bedingte Formatierung</ListLabel><Chevron /></ListRow>
      <ListRow><TableFormatIcon /><ListLabel>Als Tabelle formatieren</ListLabel><Chevron /></ListRow>
      <ListRow><CellStyleIcon /><ListLabel>Zellenformatvorlagen</ListLabel><Chevron /></ListRow>
    </Group>

    <Group $w={210} $pad={25}>
      <ListRow><InsertCellsIcon /><ListLabel>Einfügen</ListLabel><Chevron /></ListRow>
      <ListRow><DeleteCellsIcon /><ListLabel>Löschen</ListLabel><Chevron /></ListRow>
      <ListRow><FormatCellsIcon /><ListLabel>Format</ListLabel><Chevron /></ListRow>
    </Group>

    <Group $w={358} $pad={16} $row>
      <BigColumn $w={68}>
        <ToolRow $h={44}><Tool $w={52}><SigmaIcon /></Tool><Tool $w={16}><Chevron /></Tool></ToolRow>
        <ToolRow $h={44}><Tool $w={52}><FillDownIcon /></Tool><Tool $w={16}><Chevron /></Tool></ToolRow>
        <ToolRow $h={44}><Tool $w={52}><EraserIcon /></Tool><Tool $w={16}><Chevron /></Tool></ToolRow>
      </BigColumn>
      <BigColumn $w={126}>
        <BigIcon $gap={13}><SortFilterIcon /><Chevron /></BigIcon>
        <BigLabel>Sortieren<br />und filtern</BigLabel>
      </BigColumn>
      <BigColumn $w={122}>
        <BigIcon><LoupeIcon /><Chevron /></BigIcon>
        <BigLabel>Suchen und<br />auswählen</BigLabel>
      </BigColumn>
    </Group>

    <Group $w={164}>
      <BigColumn $w={162}>
        <BigIcon><AnalyzeIcon /></BigIcon>
        <BigLabel>Daten<br />analysieren</BigLabel>
      </BigColumn>
    </Group>

    <Group $w={196}>
      <BigColumn $w={194}>
        <BigIcon><ShieldDocIcon /><Chevron /></BigIcon>
        <BigLabel $dim>Vertraulichkeit</BigLabel>
      </BigColumn>
    </Group>

    <Group $w={52} $last>
      <LastLabel>erstellen</LastLabel>
    </Group>
  </RibbonBody>
);

const Formula = () => (
  <FormulaBar>
    <FormulaLeft>
      <FormulaTop>
        <NameBox>
          37
          <Spinner />
        </NameBox>
        <FormulaTools>
          <FormulaButton $w={82}><CloseIcon /></FormulaButton>
          <FormulaButton $w={36}><CheckIcon /></FormulaButton>
          <FormulaButton $w={13} />
          <FormulaButton $w={58}><FxLabel>fx</FxLabel></FormulaButton>
          <ToolSeparator $h={30} />
        </FormulaTools>
      </FormulaTop>
      <FormulaSpacer />
    </FormulaLeft>
    <FormulaValue>Becker</FormulaValue>
  </FormulaBar>
);

const LowerSheet = () => (
  <>
    <SplitLine />
    <SheetRow $cols={BOTTOM_COLS} $h={42} $size={21}>
      <Corner />
      {LETTERS.map((l) => (
        <ColumnLetter key={l}>{l}</ColumnLetter>
      ))}
      <ColumnLetter />
    </SheetRow>
    <LetterRule />
    <SheetRow $cols={BOTTOM_COLS} $h={32} $size={21}>
      <RowNumber $first $mark>1</RowNumber>
      {BOTTOM_HEAD.map((name, i) => (
        <HeadCell key={i}>
          {name}
          {i === 1 || i === 13 ? (
            <FilterOnButton $w={30}>
              <FunnelMark />
            </FilterOnButton>
          ) : (
            <FilterButton $w={30} />
          )}
        </HeadCell>
      ))}
      <Cell />
    </SheetRow>
    {BOTTOM_ROWS.map(([num, id, nr, date], r) => {
      const band = r % 2 === 0;
      const texts = [id, "Becker", "5", nr, date, "", "", "", "", "", "", "CDU/CSU", "", "", ""];
      return (
        <SheetRow key={num} $cols={BOTTOM_COLS} $h={32} $size={21.5}>
          <RowNumber $mark={r === 6}>{num}</RowNumber>
          {texts.map((text, i) => (
            <Cell key={i} $band={band} $table $handle={r === 6 && i === 14}>
              {text}
            </Cell>
          ))}
          <Cell />
          {r === 0 && <Marquee />}
        </SheetRow>
      );
    })}
    <SheetRow $cols={BOTTOM_COLS} $h={8} $size={21}>
      <Gutter />
      {Array.from({ length: 16 }, (_, i) => (
        <Cell key={i} />
      ))}
    </SheetRow>
  </>
);

export default function App() {
  return (
    <>
      <GlobalStyle />
      <Page>
        <UpperSheet />
        <Title />
        <Tabs />
        <Ribbon />
        <Formula />
        <LowerSheet />
      </Page>
    </>
  );
}
